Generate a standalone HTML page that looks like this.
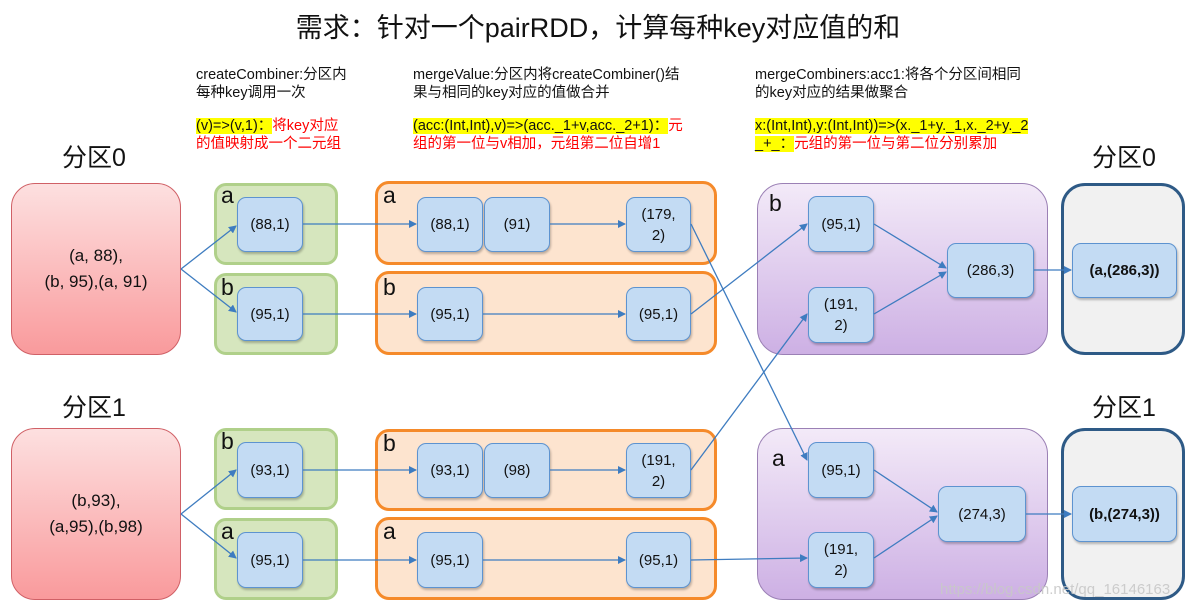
<!DOCTYPE html>
<html><head><meta charset="utf-8"><style>
*{margin:0;padding:0;box-sizing:border-box}
body{width:1196px;height:609px;background:#fff;position:relative;overflow:hidden;font-family:"Liberation Sans","Noto Sans CJK SC",sans-serif;color:#111}
.a{position:absolute}
.red{background:linear-gradient(#fde0e0,#f99a9c);border:1.5px solid #d06066;border-radius:24px;display:flex;align-items:center;justify-content:center;text-align:center;font-size:17px;line-height:26px}
.grn{background:#d6e6be;border:3px solid #b0d08a;border-radius:12px}
.org{background:#fde4cf;border:3px solid #f58a2a;border-radius:14px}
.pur{background:linear-gradient(#f3eaf8,#cdb0e4);border:1.5px solid #9b80b5;border-radius:26px}
.gry{background:#f1f1f1;border:3px solid #2e5a86;border-radius:24px}
.bl{background:#c3dbf3;border:1.5px solid #5d93d0;border-radius:9px;display:flex;align-items:center;justify-content:center;text-align:center;font-size:15px;line-height:21px;box-shadow:1px 2px 2px rgba(0,0,0,.25)}
.k{font-size:23px;line-height:22px}
.lab{font-size:25px}
.t{font-size:14.5px;line-height:18px}
.y{background:#ffff00}
.r{color:#f00}
</style></head><body>
<div class="a" style="left:0;top:6px;width:1196px;text-align:center;font-size:27px">需求：针对一个pairRDD，计算每种key对应值的和</div>

<div class="a t" style="left:196px;top:66px">createCombiner:分区内<br>每种key调用一次</div>
<div class="a t" style="left:196px;top:117px"><span class="y">(v)=&gt;(v,1)：</span><span class="r">将key对应</span><br><span class="r">的值映射成一个二元组</span></div>
<div class="a t" style="left:413px;top:66px">mergeValue:分区内将createCombiner()结<br>果与相同的key对应的值做合并</div>
<div class="a t" style="left:413px;top:117px"><span class="y">(acc:(Int,Int),v)=&gt;(acc._1+v,acc._2+1)：</span><span class="r">元</span><br><span class="r">组的第一位与v相加，元组第二位自增1</span></div>
<div class="a t" style="left:755px;top:66px">mergeCombiners:acc1:将各个分区间相同<br>的key对应的结果做聚合</div>
<div class="a t" style="left:755px;top:117px"><span class="y">x:(Int,Int),y:(Int,Int))=&gt;(x._1+y._1,x._2+y._2</span><br><span class="y">_+_：</span><span class="r">元组的第一位与第二位分别累加</span></div>

<div class="a lab" style="left:62px;top:138px">分区0</div>
<div class="a lab" style="left:62px;top:388px">分区1</div>
<div class="a lab" style="left:1092px;top:138px">分区0</div>
<div class="a lab" style="left:1092px;top:388px">分区1</div>

<div class="a red" style="left:11px;top:183px;width:170px;height:172px">(a, 88),<br>(b, 95),(a, 91)</div>
<div class="a red" style="left:11px;top:428px;width:170px;height:172px">(b,93),<br>(a,95),(b,98)</div>

<div class="a grn" style="left:214px;top:183px;width:124px;height:82px"></div>
<div class="a grn" style="left:214px;top:273px;width:124px;height:82px"></div>
<div class="a grn" style="left:214px;top:428px;width:124px;height:82px"></div>
<div class="a grn" style="left:214px;top:518px;width:124px;height:82px"></div>
<div class="a k" style="left:221px;top:184px">a</div>
<div class="a k" style="left:221px;top:276px">b</div>
<div class="a k" style="left:221px;top:430px">b</div>
<div class="a k" style="left:221px;top:520px">a</div>
<div class="a bl" style="left:237px;top:197px;width:66px;height:55px">(88,1)</div>
<div class="a bl" style="left:237px;top:287px;width:66px;height:54px">(95,1)</div>
<div class="a bl" style="left:237px;top:442px;width:66px;height:56px">(93,1)</div>
<div class="a bl" style="left:237px;top:532px;width:66px;height:56px">(95,1)</div>

<div class="a org" style="left:375px;top:181px;width:342px;height:84px"></div>
<div class="a org" style="left:375px;top:271px;width:342px;height:84px"></div>
<div class="a org" style="left:375px;top:429px;width:342px;height:82px"></div>
<div class="a org" style="left:375px;top:517px;width:342px;height:83px"></div>
<div class="a k" style="left:383px;top:184px">a</div>
<div class="a k" style="left:383px;top:276px">b</div>
<div class="a k" style="left:383px;top:432px">b</div>
<div class="a k" style="left:383px;top:520px">a</div>
<div class="a bl" style="left:417px;top:197px;width:66px;height:55px">(88,1)</div>
<div class="a bl" style="left:484px;top:197px;width:66px;height:55px">(91)</div>
<div class="a bl" style="left:626px;top:197px;width:65px;height:55px">(179,<br>2)</div>
<div class="a bl" style="left:417px;top:287px;width:66px;height:54px">(95,1)</div>
<div class="a bl" style="left:626px;top:287px;width:65px;height:54px">(95,1)</div>
<div class="a bl" style="left:417px;top:443px;width:66px;height:55px">(93,1)</div>
<div class="a bl" style="left:484px;top:443px;width:66px;height:55px">(98)</div>
<div class="a bl" style="left:626px;top:443px;width:65px;height:55px">(191,<br>2)</div>
<div class="a bl" style="left:417px;top:532px;width:66px;height:56px">(95,1)</div>
<div class="a bl" style="left:626px;top:532px;width:65px;height:56px">(95,1)</div>

<div class="a pur" style="left:757px;top:183px;width:291px;height:172px"></div>
<div class="a pur" style="left:757px;top:428px;width:291px;height:172px"></div>
<div class="a k" style="left:769px;top:192px">b</div>
<div class="a k" style="left:772px;top:447px">a</div>
<div class="a bl" style="left:808px;top:196px;width:66px;height:56px">(95,1)</div>
<div class="a bl" style="left:808px;top:287px;width:66px;height:56px">(191,<br>2)</div>
<div class="a bl" style="left:947px;top:243px;width:87px;height:55px">(286,3)</div>
<div class="a bl" style="left:808px;top:442px;width:66px;height:56px">(95,1)</div>
<div class="a bl" style="left:808px;top:532px;width:66px;height:56px">(191,<br>2)</div>
<div class="a bl" style="left:938px;top:486px;width:88px;height:56px">(274,3)</div>

<div class="a gry" style="left:1061px;top:183px;width:124px;height:172px"></div>
<div class="a gry" style="left:1061px;top:428px;width:124px;height:172px"></div>
<div class="a bl" style="left:1072px;top:243px;width:105px;height:55px;font-weight:bold">(a,(286,3))</div>
<div class="a bl" style="left:1072px;top:486px;width:105px;height:56px;font-weight:bold">(b,(274,3))</div>

<svg class="a" style="left:0;top:0" width="1196" height="609">
<defs><marker id="m" markerWidth="8" markerHeight="8" refX="7" refY="4" orient="auto" markerUnits="userSpaceOnUse"><path d="M0,0L8,4L0,8z" fill="#3e7cc0"/></marker></defs>
<g stroke="#3e7cc0" stroke-width="1.3" fill="none" marker-end="url(#m)">
<path d="M181,269L236,226"/><path d="M181,269L236,312"/>
<path d="M181,514L236,470"/><path d="M181,514L236,558"/>
<path d="M303,224L416,224"/><path d="M303,314L416,314"/><path d="M303,470L416,470"/><path d="M303,560L416,560"/>
<path d="M550,224L625,224"/><path d="M483,314L625,314"/><path d="M550,470L625,470"/><path d="M483,560L625,560"/>
<path d="M691,224L807,460"/><path d="M691,314L807,224"/><path d="M691,470L807,314"/><path d="M691,560L807,558"/>
<path d="M874,224L946,268"/><path d="M874,314L946,272"/><path d="M1034,270L1071,270"/>
<path d="M874,470L937,512"/><path d="M874,558L937,516"/><path d="M1026,514L1071,514"/>
</g></svg>
<div class="a" style="left:940px;top:581px;font-size:15px;color:rgba(200,200,200,.9)">https://blog.csdn.net/qq_16146163</div>
</body></html>
